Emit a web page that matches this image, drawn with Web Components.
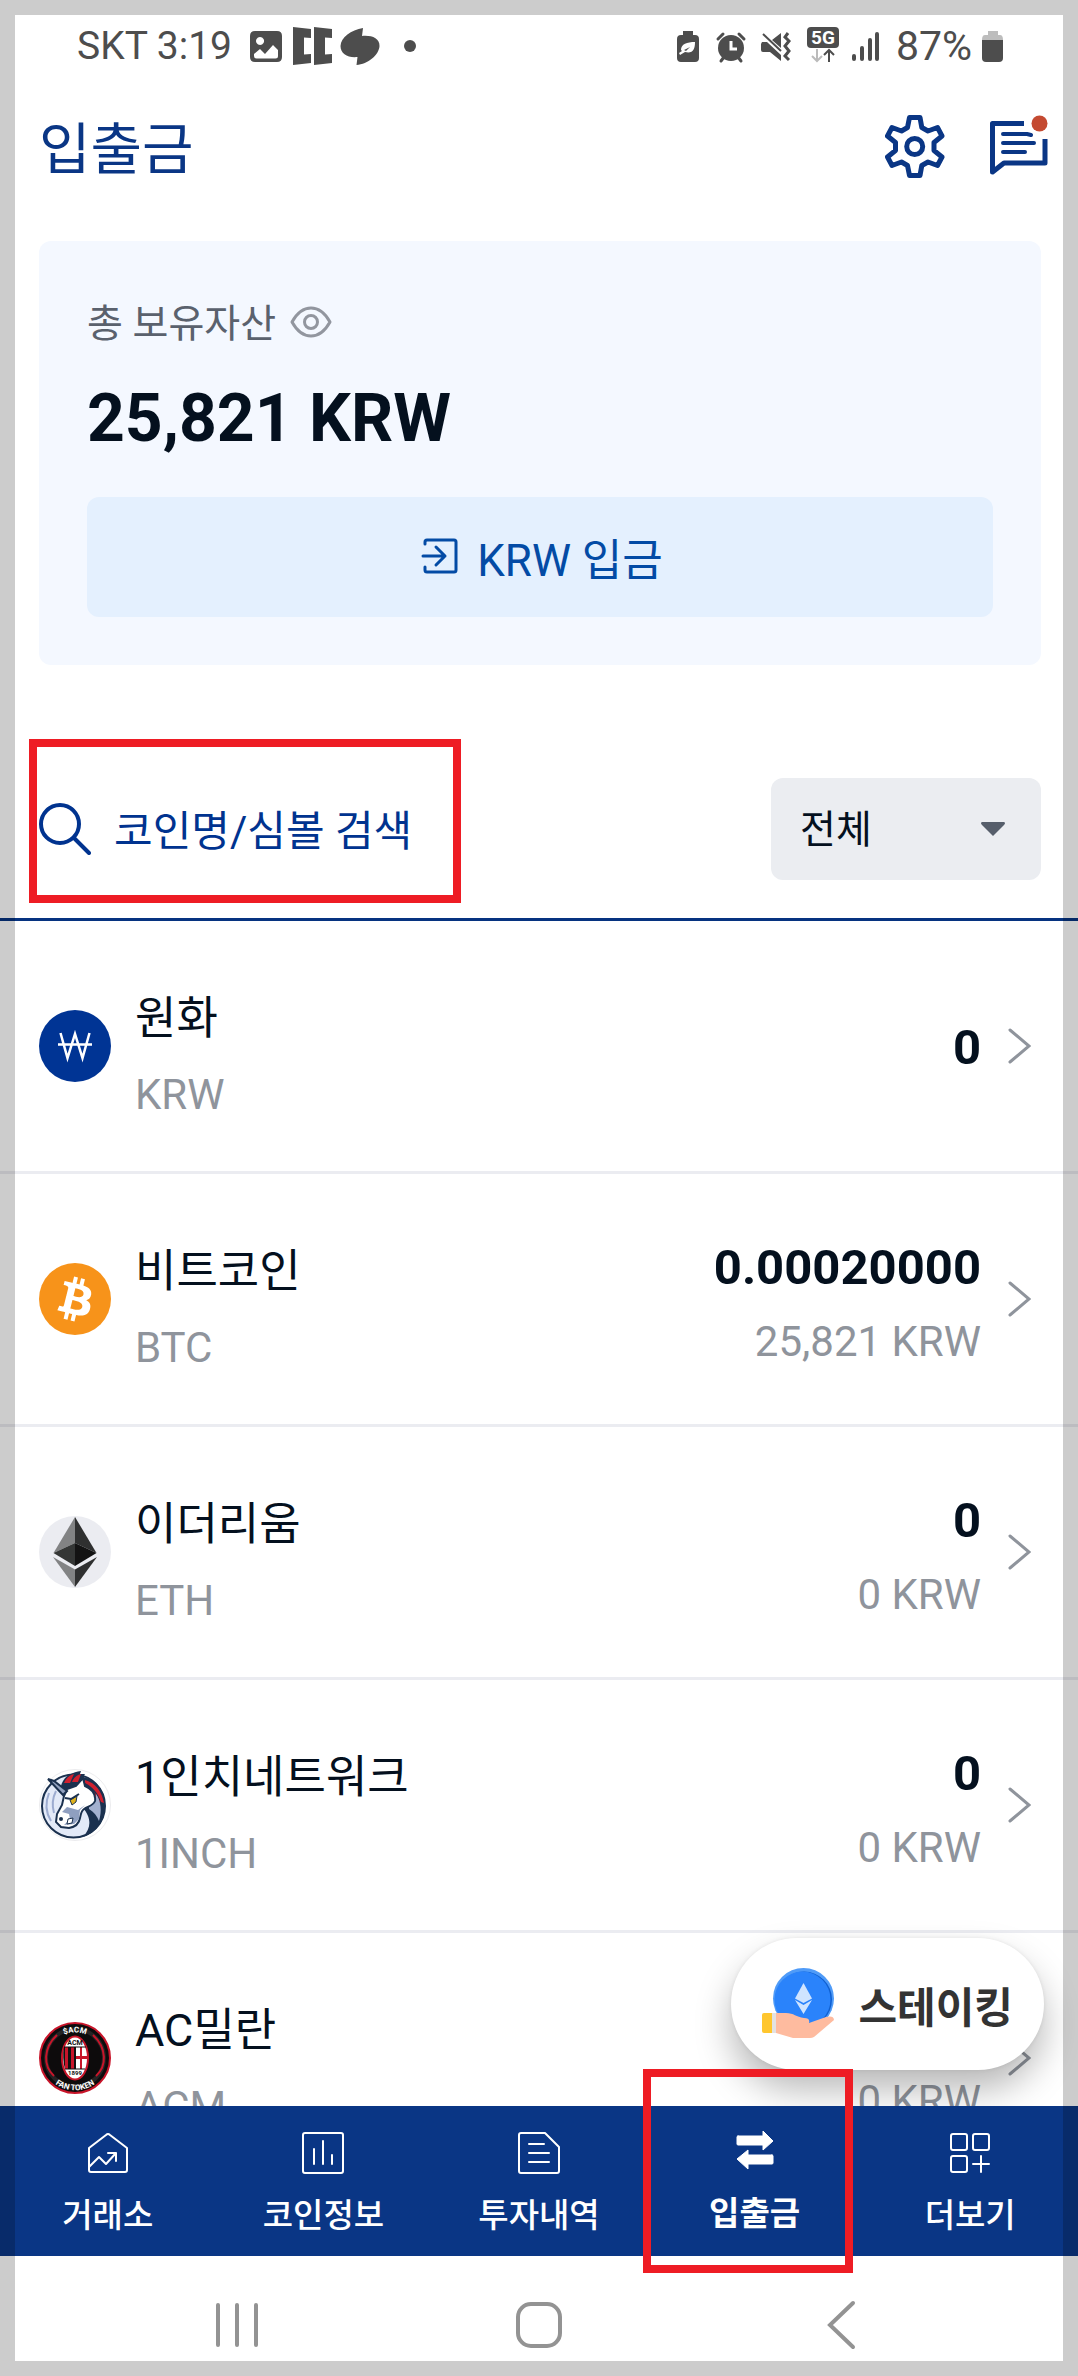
<!DOCTYPE html>
<html lang="ko">
<head>
<meta charset="UTF-8">
<meta name="viewport" content="width=device-width, initial-scale=1.0">
<title>입출금</title>
<style>
    html, body {
        margin: 0;
        height: 100%;
    }
    body {
        --navy: #0a3685;
        --ink: #04101e;
        --muted: #8f949c;
        --line: #ebecf1;
        --mark: #ee1c24;
        font-family: Roboto, "Noto Sans CJK KR", sans-serif;
        color: var(--ink);
        background: #fff;
    }
</style>
</head>
<body>
<wallet-app>
    <status-bar slot="top"></status-bar>
    <page-header slot="top">입출금</page-header>
    <asset-card slot="top" amount="25,821 KRW">총 보유자산</asset-card>
    <coin-filter slot="top"></coin-filter>

    <coin-row name="원화" symbol="KRW" amount="0"><coin-logo coin="krw"></coin-logo></coin-row>
    <coin-row name="비트코인" symbol="BTC" amount="0.00020000" value="25,821 KRW"><coin-logo coin="btc"></coin-logo></coin-row>
    <coin-row name="이더리움" symbol="ETH" amount="0" value="0 KRW"><coin-logo coin="eth"></coin-logo></coin-row>
    <coin-row name="1인치네트워크" symbol="1INCH" amount="0" value="0 KRW"><coin-logo coin="inch"></coin-logo></coin-row>
    <coin-row name="AC밀란" symbol="ACM" value="0 KRW"><coin-logo coin="acm"></coin-logo></coin-row>

    <staking-button slot="float">스테이킹</staking-button>

    <tab-bar slot="bottom">
        <tab-item icon="home">거래소</tab-item>
        <tab-item icon="chart">코인정보</tab-item>
        <tab-item icon="doc">투자내역</tab-item>
        <tab-item icon="transfer" active>입출금</tab-item>
        <tab-item icon="more">더보기</tab-item>
    </tab-bar>
    <system-nav slot="bottom"></system-nav>
</wallet-app>

<script>
// Clase base: cada componente solo define su plantilla
class BaseElement extends HTMLElement {
    constructor() {
        super();
        this._shadow = this.attachShadow({ mode: 'open' });
    }

    connectedCallback() {
        this._shadow.innerHTML = this._template();
    }

    _attr(nombre) {
        return this.getAttribute(nombre) || '';
    }
}

class WalletApp extends BaseElement {
    _template() {
        return `
            <style>
                :host {
                    display: flex;
                    flex-direction: column;
                    height: 100vh;
                    overflow: hidden;
                }
                main {
                    position: relative;
                    flex: 1;
                    min-height: 0;
                    overflow: hidden;
                }
                .frame {
                    position: fixed;
                    inset: 0;
                    z-index: 5;
                    border: 15px solid rgba(0, 0, 0, 0.2);
                    pointer-events: none;
                }
            </style>
            <slot name="top"></slot>
            <main>
                <slot></slot>
                <slot name="float"></slot>
            </main>
            <slot name="bottom"></slot>
            <div class="frame"></div>
        `;
    }
}

class StatusBar extends BaseElement {
    _template() {
        return `
            <style>
                :host {
                    display: flex;
                    justify-content: space-between;
                    align-items: center;
                    height: 92px;
                    padding: 0 74px 0 77px;
                    font-size: 39px;
                    line-height: 48px;
                    color: #4d4d4d;
                }
                div {
                    display: flex;
                    align-items: center;
                }
                .left {
                    gap: 7px;
                }
                .time {
                    margin-right: 7px;
                }
                .level {
                    margin: 0 10px;
                    font-size: 41px;
                }
                svg {
                    display: block;
                    fill: currentColor;
                }
            </style>
            <div class="left">
                <span class="time">SKT 3:19</span>
                <svg width="40" height="40" viewBox="0 0 40 40">
                    <path fill-rule="evenodd" d="M9 5h22q5 0 5 5v21q0 5-5 5H9q-5 0-5-5V10q0-5 5-5zM14 11a4 4 0 1 0 .1 0zM8 28v2q0 2.500 2.500 2.500h19q2.500 0 2.500-2.500v-6l-5-5-8 9-5-5z"/>
                </svg>
                <svg width="40" height="40" viewBox="0 0 40 40">
                    <path d="M0 1l18 2v9l-7-.5v17l7-.5v9L0 39zM21 1l18 2v9l-7-.5v17l7-.5v9l-18 2z"/>
                </svg>
                <svg width="40" height="40" viewBox="0 0 40 40">
                    <path d="M23 2l-1 8c9-1 18 2 17.500 10C39 29 28 38 16.500 39l1-8C8 32 .5 28 .5 20 1 11 11 4 23 2z"/>
                </svg>
                <svg width="40" height="40" viewBox="0 0 40 40"><circle cx="23" cy="20" r="6"/></svg>
            </div>
            <div>
                <svg width="44" height="40" viewBox="0 0 44 40">
                    <path fill-rule="evenodd" d="M17 5h10v4h2q4 0 4 4v19q0 4-4 4H15q-4 0-4-4V13q0-4 4-4h2zM29 16c-8 0-14 2-14 8l1 1-3 2 1 2 5-3c8 2 10-3 10-10zM18 24l6-3-4 4z"/>
                </svg>
                <svg width="44" height="40" viewBox="0 0 44 40">
                    <circle cx="21" cy="22" r="13"/>
                    <path d="M8 13l5-5M29 8l5 5M11 35l3-4M31 35l-3-4" stroke="currentColor" stroke-width="3" stroke-linecap="round"/>
                    <path d="M21 15v8h6" fill="none" stroke="#fff" stroke-width="3"/>
                </svg>
                <svg width="44" height="40" viewBox="0 0 44 40">
                    <path d="M8 16h5l14 13v6l-11-9H9q-2 0-2-2v-6zM27 7v15l-9-8z"/>
                    <path d="M9 8l18 17" stroke="currentColor" stroke-width="2"/>
                    <path d="M34 7l-3 4 4 4-4 5 4 5-4 5 4 4" fill="none" stroke="currentColor" stroke-width="3"/>
                </svg>
                <svg width="44" height="40" viewBox="0 0 44 40">
                    <rect x="9" y="1" width="32" height="21" rx="4"/>
                    <text x="25" y="18" text-anchor="middle" font-size="19" font-weight="700" fill="#fff">5G</text>
                    <path d="M19 23v12m-5-5l5 5 5-5" fill="none" stroke="#bbb" stroke-width="2"/>
                    <path d="M31 36V24m-5 5l5-5 5 5" fill="none" stroke="currentColor" stroke-width="2"/>
                </svg>
                <svg width="44" height="40" viewBox="0 0 44 40">
                    <path d="M12 30v3M20 22v11M28 14v19M35 8v25" stroke="currentColor" stroke-width="4" stroke-linecap="round"/>
                </svg>
                <span class="level">87%</span>
                <svg width="22" height="40" viewBox="0 0 22 40">
                    <path d="M6 5h10v4h2q3 0 3 5H0q0-5 3-5h3z" fill="#bdbdbd"/>
                    <path d="M0 14h21v18q0 4-4 4H4q-4 0-4-4z"/>
                </svg>
            </div>
        `;
    }
}

class PageHeader extends BaseElement {
    _template() {
        return `
            <style>
                :host {
                    display: flex;
                    align-items: center;
                    gap: 45px;
                    height: 110px;
                    padding: 0 28px 0 39px;
                    color: var(--navy);
                }
                h1 {
                    flex: 1;
                    margin: 0;
                    padding-top: 6px;
                    font-size: 56px;
                    line-height: 80px;
                    font-weight: 400;
                }
                button {
                    padding: 0;
                    border: 0;
                    background: none;
                    color: inherit;
                    cursor: pointer;
                }
                svg {
                    display: block;
                    fill: none;
                    stroke: currentColor;
                    stroke-width: 5;
                    stroke-linejoin: round;
                    stroke-linecap: round;
                }
            </style>
            <h1><slot></slot></h1>
            <button aria-label="설정">
                <svg width="60" height="64" viewBox="0 0 60 64">
                    <path d="M24.500 2.500H35l1.800 10L43 16l9.500-3.500L57 21l-8 6.500v8l8 6.500-4.500 8.500L43 47l-6.200 3.500-1.800 10H24.500l-2-10-6-3.500L7 50.500 2.500 42l8-6.500v-8l-8-6.500L7 12.500l9.500 3.500 6-3.500z"/>
                    <circle cx="29.700" cy="31.500" r="8"/>
                </svg>
            </button>
            <button aria-label="알림">
                <svg width="60" height="64" viewBox="0 0 60 64">
                    <path d="M34 8.500H2.500V57L14 48h41V24" stroke-linecap="butt"/>
                    <path d="M13 19h24l4 1M13 28h31M13 37h22" stroke-width="4"/>
                    <circle cx="49.500" cy="8.500" r="12" fill="#fff" stroke="none"/>
                    <circle cx="49.500" cy="8.500" r="8" fill="#c44a31" stroke="none"/>
                </svg>
            </button>
        `;
    }
}

class AssetCard extends BaseElement {
    _template() {
        return `
            <style>
                :host {
                    display: block;
                    margin: 39px 37px 0 39px;
                    padding: 48px;
                    border-radius: 12px;
                    background: #f4f8ff;
                }
                .label {
                    display: flex;
                    align-items: center;
                    gap: 14px;
                    font-size: 39px;
                    line-height: 70px;
                    color: #5a616d;
                }
                .amount {
                    margin: 24px 0 42px;
                    font-size: 66px;
                    line-height: 72px;
                    font-weight: 700;
                }
                button {
                    display: flex;
                    justify-content: center;
                    align-items: center;
                    gap: 18px;
                    width: 100%;
                    height: 120px;
                    padding: 0 0 0 4px;
                    border: 0;
                    border-radius: 12px;
                    background: #e4f0fe;
                    color: #034ba5;
                    font: inherit;
                    font-size: 44px;
                    cursor: pointer;
                }
                svg {
                    display: block;
                    fill: none;
                    stroke: currentColor;
                    stroke-width: 3;
                    stroke-linecap: round;
                    stroke-linejoin: round;
                }
                .eye {
                    color: #92969f;
                }
            </style>
            <div class="label">
                <span><slot></slot></span>
                <svg class="eye" width="42" height="36" viewBox="0 0 42 36">
                    <path d="M2 16C7 7 14 2 21 2s14 5 19 14c-5 9-12 14-19 14S7 25 2 16z"/>
                    <circle cx="21" cy="16" r="6.500"/>
                </svg>
            </div>
            <div class="amount">${this._attr('amount')}</div>
            <button>
                <svg width="38" height="40" viewBox="0 0 38 40">
                    <path d="M4 7V5q0-2 2-2h27q2 0 2 2v28q0 2-2 2H6q-2 0-2-2v-3M2 19h22M15 10l9 9-9 9"/>
                </svg>
                <span>KRW 입금</span>
            </button>
        `;
    }
}

class CoinFilter extends BaseElement {
    _template() {
        return `
            <style>
                :host {
                    display: flex;
                    justify-content: space-between;
                    align-items: center;
                    padding: 113px 37px 38px 39px;
                    border-bottom: 3px solid #063380;
                }
                .search {
                    position: relative;
                    display: flex;
                    align-items: center;
                    gap: 23px;
                    color: #00338f;
                }
                .search::after {
                    content: "";
                    position: absolute;
                    inset: -39px -7px -23px -10px;
                    border: 8px solid var(--mark);
                    pointer-events: none;
                }
                input {
                    box-sizing: border-box;
                    width: 340px;
                    height: 102px;
                    padding: 5px 0 0;
                    border: 0;
                    background: none;
                    font: inherit;
                    font-size: 42px;
                    color: inherit;
                    outline: none;
                }
                input::placeholder {
                    color: inherit;
                    opacity: 1;
                }
                .market {
                    position: relative;
                    display: flex;
                    align-items: center;
                }
                select {
                    appearance: none;
                    width: 270px;
                    height: 102px;
                    padding: 2px 29px 0;
                    border: 0;
                    border-radius: 12px;
                    background: #ebedf1;
                    font: inherit;
                    font-size: 39px;
                    color: var(--ink);
                }
                .market svg {
                    position: absolute;
                    right: 36px;
                    pointer-events: none;
                }
            </style>
            <label class="search">
                <svg width="52" height="52" viewBox="0 0 52 52" fill="none" stroke="currentColor" stroke-width="4" stroke-linecap="round" aria-label="검색">
                    <circle cx="21" cy="21" r="19"/>
                    <path d="M35 35l15 15"/>
                </svg>
                <input type="text" placeholder="코인명/심볼 검색">
            </label>
            <label class="market" aria-label="시장">
                <select aria-label="시장"><option>전체</option></select>
                <svg width="24" height="14" viewBox="0 0 24 14" fill="#565e6b">
                    <path d="M1 0h22q2 1 0 3L12 14 1 3q-2-2 0-3z"/>
                </svg>
            </label>
        `;
    }
}

class CoinRow extends BaseElement {
    _template() {
        const valor = this._attr('value');
        return `
            <style>
                :host {
                    display: block;
                    border-bottom: 3px solid var(--line);
                }
                a {
                    display: flex;
                    align-items: center;
                    min-height: 250px;
                    padding: 0 47px 0 39px;
                    color: inherit;
                    text-decoration: none;
                }
                .coin, .balance {
                    padding-top: 3px;
                }
                .coin {
                    flex: 1;
                    margin-left: 24px;
                }
                .name {
                    font-size: 45px;
                    line-height: 94px;
                }
                .symbol, .value {
                    font-size: 42px;
                    color: var(--muted);
                }
                .symbol {
                    line-height: 58px;
                }
                .balance {
                    text-align: right;
                }
                .amount {
                    min-height: 82px;
                    font-size: 49px;
                    line-height: 82px;
                    font-weight: 700;
                }
                .value {
                    line-height: 66px;
                }
                svg {
                    margin-left: 27px;
                    fill: none;
                    stroke: var(--muted);
                    stroke-width: 3;
                    stroke-linecap: round;
                }
            </style>
            <a href="#${this._attr('symbol')}">
                <slot></slot>
                <div class="coin">
                    <div class="name">${this._attr('name')}</div>
                    <div class="symbol">${this._attr('symbol')}</div>
                </div>
                <div class="balance">
                    <div class="amount">${this._attr('amount')}</div>
                    ${valor ? `<div class="value">${valor}</div>` : ''}
                </div>
                <svg width="23" height="36" viewBox="0 0 23 36"><path d="M2 2l19 16L2 34"/></svg>
            </a>
        `;
    }
}

const LOGOS = {
    krw: `
        <circle cx="36" cy="36" r="36" fill="#003494"/>
        <path d="M21.500 23l7 25L36 24l7.500 24 7-25M19 34.500h34" fill="none" stroke="#fff" stroke-width="2.500"/>`,
    btc: `
        <circle cx="36" cy="36" r="36" fill="#f7931a"/>
        <path transform="scale(2.250)" fill="#fff" d="M23.189 14.020c.314-2.096-1.283-3.223-3.465-3.975l.708-2.840-1.728-.43-.69 2.765c-.454-.114-.92-.22-1.385-.326l.695-2.783L15.596 6l-.708 2.839c-.376-.086-.746-.17-1.104-.26l.002-.009-2.384-.595-.46 1.846s1.283.294 1.256.312c.7.175.826.638.805 1.006l-.806 3.235c.048.012.11.03.18.057l-.183-.045-1.130 4.532c-.086.212-.303.531-.793.41.018.025-1.256-.313-1.256-.313l-.858 1.978 2.250.561c.418.105.828.215 1.231.318l-.715 2.872 1.727.43.708-2.840c.472.127.93.245 1.378.357l-.706 2.828 1.728.43.715-2.866c2.948.558 5.164.333 6.097-2.333.752-2.146-.037-3.385-1.588-4.192 1.130-.26 1.980-1.003 2.207-2.538zm-3.950 5.538c-.533 2.147-4.148.986-5.320.695l.95-3.805c1.172.293 4.929.872 4.370 3.110zm.535-5.569c-.487 1.953-3.495.96-4.470.717l.86-3.450c.975.243 4.118.696 3.610 2.733z"/>`,
    eth: `
        <circle cx="36" cy="36" r="36" fill="#ebecf1"/>
        <path d="M36 1v26L14.500 37z" fill="#828384"/>
        <path d="M36 1v26l21.500 10z" fill="#2f3030"/>
        <path d="M36 27v23L14.500 37z" fill="#343635"/>
        <path d="M36 27v23l21.500-13z" fill="#131313"/>
        <path d="M14 41l22 12.500V71z" fill="#828384"/>
        <path d="M58 41L36 53.500V71z" fill="#2f3030"/>`,
    inch: `
        <circle cx="36" cy="36" r="35.500" fill="#fff" stroke="#ececee"/>
        <circle cx="34.500" cy="37" r="31.500" fill="#e3eaf8" stroke="#1b314f" stroke-width="2"/>
        <path d="M10 24c-4 10-3 20 2 28M17 22c-4 8-4 15-2 22" fill="none" stroke="#9dacd0" stroke-width="2"/>
        <path d="M22 17c2-8 8-13 20-15l-1 3 5 0-2 3c14 3 22 14 22 27 1 16-8 28-22 33 6-7 8-13 5-21-2-5-4-8-9-9z" fill="#1b314f"/>
        <path d="M25 14c2-5 6-8 10-9l-4 9zM33 13c2-5 5-7 9-8l-3 8zM46 11c11 3 17 12 19 23l-3-1c-3-9-8-15-16-19z" fill="#d0202f"/>
        <path d="M47 19c7 3 11 8 13 14" fill="none" stroke="#d0202f" stroke-width="2"/>
        <path d="M50 37c5-3 7-7 7-12 5 7 6 17 3 27-2-5-5-9-10-12z" fill="#a3b1d0"/>
        <path d="M28 20l9-3 7-8 2 8c7 3 11 8 10 15-2 5-7 5-11 8-3 2-3 5-4 9-1 6-5 9-11 10l-8-1-5-5 1-8 5-9 2-9z" fill="#fff" stroke="#1b314f" stroke-width="2"/>
        <path d="M46 36l-7 5-11-3-5 5 7 2 1 5-6 6 10-1 5-5 1-9z" fill="#8f9fc0"/>
        <path d="M31 31l7-4-1 6-4 3z" fill="#e0b21b" stroke="#1b314f"/>
        <path d="M26 29l6 1 8-5" fill="none" stroke="#1b314f" stroke-width="2"/>
        <circle cx="22" cy="50" r="2" fill="#1b314f"/>
        <path d="M29 50l5-1-1 5-5 1z" fill="#fff" stroke="#1b314f"/>
        <path d="M9 10l6 2 13 10-4 4z" fill="#93a2c0" stroke="#1b314f" stroke-width="2"/>`,
    acm: `
        <circle cx="36" cy="36" r="35" fill="#0d0b0c" stroke="#c8152a" stroke-width="2"/>
        <circle cx="36" cy="36" r="29" fill="none" stroke="#252324" stroke-width="4"/>
        <path d="M18 13c-14 13-14 31-3 41M54 13c14 13 14 31 3 41" fill="none" stroke="#c8152a" stroke-width="2"/>
        <ellipse cx="36" cy="36" rx="13" ry="21.500" fill="#fff" stroke="#c8152a" stroke-width="2"/>
        <path d="M25 25h12v22H26q-3-11-1-22z" fill="#111"/>
        <path d="M26 25h3v22h-3zM32 25h3v22h-3z" fill="#c8152a"/>
        <path d="M37 34h11v3H37zM41 25h2v22h-2z" fill="#c8152a"/>
        <path d="M25 25h22M26 47h20" stroke="#111" stroke-width="1"/>
        <path id="top" d="M18 17a28 28 0 0 1 36 0" fill="none"/>
        <path id="low" d="M9 55a34 34 0 0 0 54 0" fill="none"/>
        <g font-weight="700" font-size="8" fill="#fff" text-anchor="middle">
            <text><textPath href="#top" startOffset="50%">$ACM</textPath></text>
            <text><textPath href="#low" startOffset="50%">FAN TOKEN</textPath></text>
            <text x="36" y="23" font-size="7" fill="#111">ACM</text>
            <text x="36" y="53" font-size="6" fill="#111">1899</text>
        </g>`
};

class CoinLogo extends BaseElement {
    _template() {
        return `
            <style>
                :host {
                    display: block;
                    flex: none;
                }
                svg {
                    display: block;
                }
            </style>
            <svg width="72" height="72" viewBox="0 0 72 72" aria-hidden="true">${LOGOS[this._attr('coin')]}</svg>
        `;
    }
}

class StakingButton extends BaseElement {
    _template() {
        return `
            <style>
                :host {
                    position: absolute;
                    right: 34px;
                    bottom: 36px;
                }
                button {
                    display: flex;
                    align-items: center;
                    gap: 24px;
                    height: 132px;
                    padding: 0 31px;
                    border: 0;
                    border-radius: 66px;
                    background: #fff;
                    box-shadow: 0 20px 36px rgba(0, 0, 0, 0.28), 0 0 4px rgba(0, 0, 0, 0.08);
                    font: inherit;
                    font-size: 42px;
                    font-weight: 700;
                    color: #333;
                    cursor: pointer;
                }
            </style>
            <button>
                <svg width="72" height="72" viewBox="0 0 72 72" aria-hidden="true">
                    <circle cx="41.500" cy="30.500" r="30.500" fill="#4f9bf8"/>
                    <circle cx="42" cy="31.500" r="28" fill="#0f5fd0"/>
                    <circle cx="40.500" cy="31.500" r="28" fill="#2a83fb"/>
                    <path d="M41.500 15L50 30.500 41.500 35 33 30.500z" fill="#cfe4ff"/>
                    <path d="M33 32l8.500 5 8.500-5-8.500 14z" fill="#cfe4ff"/>
                    <path d="M14 45h10c8 0 10 4 18 5 4 0 6 1 5 5l17-6c4-1 8-1 8 3L52 69q-2 1-4 1H31l-17-5z" fill="#febb9f"/>
                    <path d="M10 45h4v20h-4z" fill="#e2e2e2"/>
                    <path d="M2 45h8v20H2q-2 0-2-2V47q0-2 2-2z" fill="#ffc62e"/>
                </svg>
                <slot></slot>
            </button>
        `;
    }
}

class TabBar extends BaseElement {
    _template() {
        return `
            <style>
                :host {
                    position: relative;
                    z-index: 2;
                    display: block;
                    background: var(--navy);
                    color: #fff;
                }
                nav {
                    display: grid;
                    grid-template-columns: repeat(5, 1fr);
                }
            </style>
            <nav><slot></slot></nav>
        `;
    }
}

const TAB_ICONS = {
    home: '<path d="M19 3q2-2 4 0l17 13v22q0 2-2 2H4q-2 0-2-2V16zM2 35l10-10 7 7 10-11M21 21h8v8"/>',
    chart: '<rect x="1" y="1" width="40" height="40" rx="2"/><path d="M12 17v15M21 9v23M30 23v9"/>',
    doc: '<path d="M3 1h24l14 14v24q0 2-2 2H3q-2 0-2-2V3q0-2 2-2zM11 12h15M11 21h20M11 30h20"/>',
    transfer: '<path fill="currentColor" stroke-width="1" d="M4 8h25V3l10 10-10 9v-5H4q-1 0-1-1V9q0-1 1-1zM38 27H14v-5L3 31l11 10v-5h24q1 0 1-1v-7q0-1-1-1z"/>',
    more: '<rect x="2" y="2" width="16" height="16" rx="2"/><rect x="24" y="2" width="16" height="16" rx="2"/><rect x="2" y="24" width="16" height="16" rx="2"/><path d="M24 32h16M32 24v16"/>'
};

class TabItem extends BaseElement {
    _template() {
        return `
            <style>
                :host {
                    position: relative;
                    display: block;
                }
                a {
                    display: flex;
                    flex-direction: column;
                    align-items: center;
                    gap: 20px;
                    padding: 26px 0 18px;
                    font-size: 33px;
                    line-height: 44px;
                    font-weight: 500;
                    color: inherit;
                    text-decoration: none;
                }
                svg {
                    display: block;
                    fill: none;
                    stroke: currentColor;
                    stroke-width: 2;
                    stroke-linecap: round;
                    stroke-linejoin: round;
                }
                :host([active]) a {
                    gap: 22px;
                    padding: 22px 0 20px;
                    font-weight: 700;
                }
                :host([active])::after {
                    content: "";
                    position: absolute;
                    inset: -37px 9px -17px -4px;
                    border: 8px solid var(--mark);
                    pointer-events: none;
                }
            </style>
            <a href="#${this._attr('icon')}">
                <svg width="42" height="42" viewBox="0 0 42 42">${TAB_ICONS[this._attr('icon')]}</svg>
                <span><slot></slot></span>
            </a>
        `;
    }
}

class SystemNav extends BaseElement {
    _template() {
        return `
            <style>
                :host {
                    display: grid;
                    grid-template-columns: repeat(3, 1fr);
                    justify-items: center;
                    padding: 42px 86px 24px;
                }
                button {
                    padding: 0;
                    border: 0;
                    background: none;
                    cursor: pointer;
                }
                svg {
                    display: block;
                    fill: none;
                    stroke: #939393;
                    stroke-width: 4;
                    stroke-linecap: round;
                }
            </style>
            <button aria-label="최근 앱">
                <svg width="54" height="54" viewBox="0 0 54 54"><path d="M8 7v40M27 7v40M46 7v40"/></svg>
            </button>
            <button aria-label="홈">
                <svg width="54" height="54" viewBox="0 0 54 54"><rect x="6" y="6" width="42" height="42" rx="13"/></svg>
            </button>
            <button aria-label="뒤로">
                <svg width="54" height="54" viewBox="0 0 54 54"><path d="M39 5L16 27l23 22"/></svg>
            </button>
        `;
    }
}

customElements.define('wallet-app', WalletApp);
customElements.define('status-bar', StatusBar);
customElements.define('page-header', PageHeader);
customElements.define('asset-card', AssetCard);
customElements.define('coin-filter', CoinFilter);
customElements.define('coin-row', CoinRow);
customElements.define('coin-logo', CoinLogo);
customElements.define('staking-button', StakingButton);
customElements.define('tab-bar', TabBar);
customElements.define('tab-item', TabItem);
customElements.define('system-nav', SystemNav);
</script>
</body>
</html>
